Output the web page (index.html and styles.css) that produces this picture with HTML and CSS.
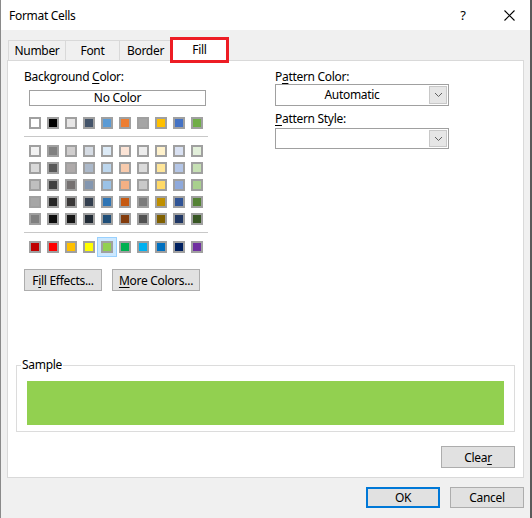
FILE: index.html
```html
<!DOCTYPE html>
<html lang="en">
<head>
  <meta charset="UTF-8">
  <title>Format Cells</title>
  <link rel="stylesheet" href="styles.css">
</head>
<body>
  <div class="window">
    <div class="titlebar">
      <span class="title">Format Cells</span>
      <span class="cap-btn help">?</span>
      <span class="cap-btn close">
        <svg width="11" height="11" viewBox="0 0 11 11"><path d="M0.5 0.5 L10.5 10.5 M10.5 0.5 L0.5 10.5" stroke="#000" stroke-width="1.1" fill="none"/></svg>
      </span>
    </div>

    <div class="tabs">
      <div class="tab tab-number">Number</div>
      <div class="tab tab-font">Font</div>
      <div class="tab tab-border">Border</div>
      <div class="tab tab-fill active">Fill</div>
    </div>

    <div class="panel">
      <div class="top">
        <div class="bg-col">
          <div class="label">Background <u>C</u>olor:</div>
          <div class="no-color">No Color</div>
          <div class="swatches" id="theme-row"></div>
          <div class="sep"></div>
          <div class="swatches" id="tints"></div>
          <div class="sep"></div>
          <div class="swatches" id="standard"></div>
          <div class="btn-row">
            <button class="btn fill-effects">F<u>i</u>ll Effects...</button>
            <button class="btn more-colors"><u>M</u>ore Colors...</button>
          </div>
        </div>
        <div class="pattern-col">
          <div class="label">P<u>a</u>ttern Color:</div>
          <div class="dropdown">
            <span class="dd-value">Automatic</span>
            <span class="dd-arrow"><svg width="9" height="6" viewBox="0 0 9 6"><path d="M1 1 L4.5 4.5 L8 1" stroke="#606060" fill="none"/></svg></span>
          </div>
          <div class="label label-style"><u>P</u>attern Style:</div>
          <div class="dropdown dd-style">
            <span class="dd-value"></span>
            <span class="dd-arrow"><svg width="9" height="6" viewBox="0 0 9 6"><path d="M1 1 L4.5 4.5 L8 1" stroke="#606060" fill="none"/></svg></span>
          </div>
        </div>
      </div>

      <fieldset class="sample">
        <legend>Sample</legend>
        <div class="sample-fill"></div>
      </fieldset>

      <div class="clear-row">
        <button class="btn clear">Clea<u>r</u></button>
      </div>
    </div>

    <div class="footer">
      <button class="btn ok">OK</button>
      <button class="btn cancel">Cancel</button>
    </div>
  </div>

  <script>
    var theme = ["#FFFFFF","#000000","#E7E6E6","#44546A","#5B9BD5","#ED7D31","#A5A5A5","#FFC000","#4472C4","#70AD47"];
    var tints = [
      ["#F2F2F2","#808080","#D0CECE","#D6DCE4","#DDEBF7","#FCE4D6","#EDEDED","#FFF2CC","#D9E1F2","#E2EFDA"],
      ["#D9D9D9","#595959","#AEAAAA","#ACB9CA","#BDD7EE","#F8CBAD","#DBDBDB","#FFE699","#B4C6E7","#C6E0B4"],
      ["#BFBFBF","#404040","#757171","#8497B0","#9BC2E6","#F4B084","#C9C9C9","#FFD966","#8EA9DB","#A9D08E"],
      ["#A6A6A6","#262626","#3A3838","#333F4F","#2F75B5","#C65911","#7B7B7B","#BF8F00","#305496","#548235"],
      ["#808080","#0D0D0D","#161616","#222B35","#1F4E78","#833C0C","#525252","#806000","#203764","#375623"]
    ];
    var standard = ["#C00000","#FF0000","#FFC000","#FFFF00","#92D050","#00B050","#00B0F0","#0070C0","#002060","#7030A0"];

    function fill(id, colors, selected) {
      var box = document.getElementById(id);
      colors.forEach(function (c) {
        var s = document.createElement("span");
        s.className = "swatch" + (c === selected ? " selected" : "");
        s.style.background = c;
        box.appendChild(s);
      });
    }

    fill("theme-row", theme);
    fill("tints", [].concat.apply([], tints));
    fill("standard", standard, "#92D050");
  </script>
</body>
</html>
```

FILE: styles.css
```css
* {
  box-sizing: border-box;
}
body {
  margin: 0;
  font-family: "Segoe UI", "Noto Sans", sans-serif;
  font-size: 12px;
  letter-spacing: -0.3px;
  color: #000;
}
u {
  text-decoration-thickness: 1px;
  text-underline-offset: 2px;
}
.window {
  width: 532px;
  height: 518px;
  background: #f0f0f0;
  border-left: 1px solid #8a8a8a;
  border-right: 2px solid #5a5a5a;
  display: flex;
  flex-direction: column;
}
.titlebar {
  height: 30px;
  background: #fff;
  display: flex;
  align-items: center;
  padding-left: 8px;
}
.title {
  flex: 1;
}
.cap-btn {
  width: 46px;
  height: 30px;
  display: flex;
  align-items: center;
  justify-content: center;
}
.help {
  font-size: 13px;
  margin-left: 4px;
}
.close {
  margin-right: -2px;
}
.tabs {
  display: flex;
  margin: 10px 0 0 7px;
  height: 20px;
}
.tab {
  height: 20px;
  line-height: 19px;
  text-align: center;
  border: 1px solid #d9d9d9;
  border-bottom: none;
  border-right: none;
}
.tab-number { width: 57px; }
.tab-font { width: 54px; }
.tab-border { width: 53px; border-right: 1px solid #d9d9d9; }
.tab-fill {
  width: 53px;
  margin-left: 1px;
  background: #fff;
  border: none;
  outline: 3px solid #ed1c24;
  position: relative;
  z-index: 2;
}
.panel {
  margin-left: 6px;
  width: 517px;
  height: 418px;
  background: #fff;
  border: 1px solid #d9d9d9;
  display: flex;
  flex-direction: column;
  padding: 0 8px 0 8px;
}
.top {
  display: flex;
  padding: 8px 0 0 8px;
}
.bg-col {
  width: 184px;
}
.label {
  line-height: 16px;
  height: 16px;
}
.no-color {
  margin: 5px 0 0 5px;
  width: 177px;
  height: 16px;
  line-height: 14px;
  border: 1px solid #a0a0a0;
  text-align: center;
}
.swatches {
  display: grid;
  grid-template-columns: repeat(10, 12px);
  column-gap: 6px;
  row-gap: 5px;
  margin-left: 5px;
}
#theme-row {
  margin-top: 11px;
}
.sep {
  height: 1px;
  background: #c8c8c8;
  margin: 7px 0 8px;
}
.swatch {
  width: 12px;
  height: 12px;
  border: 2px solid #a0a0a0;
}
.swatch.selected {
  box-shadow: 0 0 0 3px #cce8ff, 0 0 0 4px #99d1ff;
}
.btn-row {
  display: flex;
  gap: 10px;
  margin-top: 16px;
}
.btn {
  font: inherit;
  letter-spacing: inherit;
  color: #000;
  height: 22px;
  padding: 0;
  background: #e1e1e1;
  border: 1px solid #adadad;
}
.fill-effects { width: 78px; }
.more-colors { width: 88px; }
.pattern-col {
  margin-left: 67px;
  width: 174px;
}
.pattern-col .label {
  height: 15px;
  line-height: 15px;
}
.label-style {
  margin: 5px 0 2px;
}
.dropdown {
  height: 22px;
  border: 1px solid #a0a0a0;
  display: flex;
}
.dd-style {
  height: 21px;
}
.dd-value {
  flex: 1;
  text-align: center;
  line-height: 20px;
}
.dd-arrow {
  width: 18px;
  margin: 1px;
  background: #e6e6e6;
  border: 1px solid #c8c8c8;
  display: flex;
  align-items: center;
  justify-content: center;
}
.sample {
  margin: auto 0 0 0;
  border: 1px solid #dcdcdc;
  padding: 8px 10px 6px 10px;
}
.sample legend {
  padding: 0 1px;
  margin-left: -6px;
  line-height: 16px;
}
.sample-fill {
  height: 44px;
  background: #92d050;
}
.clear-row {
  display: flex;
  justify-content: flex-end;
  margin: 14px 0 9px;
}
.clear { width: 74px; }
.footer {
  display: flex;
  justify-content: flex-end;
  gap: 10px;
  padding-right: 6px;
  margin-top: 9px;
}
.footer .btn {
  width: 74px;
  height: 21px;
}
.ok {
  border: 2px solid #0078d7;
}
```
